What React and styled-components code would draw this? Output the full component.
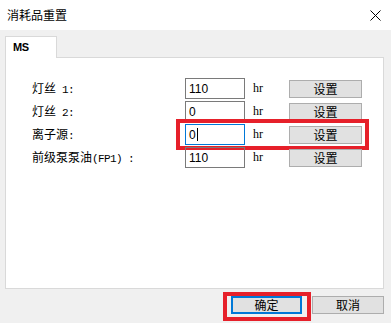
import styled, { createGlobalStyle } from 'styled-components'

const GlobalStyle = createGlobalStyle`
  html, body {
    margin: 0;
    padding: 0;
    background: #f0f0f0;
    overflow: hidden;
  }
  * { box-sizing: border-box; }
`

const Window = styled.div`
  width: 391px;
  height: 323px;
  display: flex;
  flex-direction: column;
  background: #f0f0f0;
  font-family: "Noto Sans CJK SC", "Liberation Sans", sans-serif;
  font-size: 12px;
  color: #000;
`

const TitleBar = styled.div`
  height: 30px;
  background: #fff;
  display: flex;
  align-items: center;
  justify-content: space-between;
  padding: 0 10px 0 7px;
`
const Title = styled.span`
  font-size: 12px;
  line-height: 1;
`
const Close = styled.svg`
  width: 11px;
  height: 11px;
`

const Body = styled.div`
  flex: 1;
  display: flex;
  flex-direction: column;
  padding: 6px 7px 0 5px;
`

const TabStrip = styled.div`
  display: flex;
  height: 21px;
`
const Tab = styled.div`
  width: 52px;
  height: 22px;
  background: #fff;
  border: 1px solid #d9d9d9;
  border-bottom: none;
  position: relative;
  z-index: 1;
  padding: 5px 0 0 7px;
  font-family: "Liberation Sans", sans-serif;
  font-size: 11px;
  font-weight: bold;
  line-height: 1;
  letter-spacing: -0.5px;
`

const Panel = styled.div`
  height: 232px;
  background: #fff;
  border: 1px solid #d9d9d9;
  padding: 20px 0 0 26px;
  display: flex;
  flex-direction: column;
  gap: 2px;
`

const Row = styled.div`
  position: relative;
  display: flex;
  align-items: center;
  height: 21px;
`
const Label = styled.span`
  width: 153px;
  line-height: 1;
  white-space: pre;
`
const Ascii = styled.span`
  font-family: "Liberation Mono", monospace;
  font-size: 11px;
  letter-spacing: -0.6px;
`
const Field = styled.div`
  width: 60px;
  height: 21px;
  border: 1px solid ${p => (p.focused ? '#0078d7' : '#7a7a7a')};
  display: flex;
  align-items: center;
  padding-left: 3px;
  font-family: "Liberation Sans", sans-serif;
  font-size: 12px;
`
const Caret = styled.span`
  display: inline-block;
  width: 1px;
  height: 13px;
  background: #000;
  margin-left: 1px;
`
const Unit = styled.span`
  width: 44px;
  padding-left: 8px;
  font-family: "Liberation Serif", serif;
  font-size: 12px;
`
const Button = styled.div`
  width: ${p => p.w || 73}px;
  height: 18px;
  background: #e1e1e1;
  border: ${p => (p.primary ? '2px solid #0078d7' : '1px solid #adadad')};
  display: flex;
  align-items: center;
  justify-content: center;
  position: relative;
  line-height: 1;
`

const Highlight = styled.div`
  position: absolute;
  border: 4px solid #e6202a;
  top: ${p => p.top}px;
  left: ${p => p.left}px;
  width: ${p => p.width}px;
  height: ${p => p.height}px;
  pointer-events: none;
`

const Footer = styled.div`
  display: flex;
  justify-content: flex-end;
  gap: 10px;
  padding-top: 7px;
`

const rows = [
  { name: '灯丝', suffix: ' 1:', value: '110' },
  { name: '灯丝', suffix: ' 2:', value: '0' },
  { name: '离子源', suffix: ':', value: '0', focused: true },
  { name: '前级泵泵油', suffix: '(FP1) :', value: '110' },
]

const App = () => (
  <Window>
    <GlobalStyle />
    <TitleBar>
      <Title>消耗品重置</Title>
      <Close viewBox="0 0 11 11">
        <path d="M0.5 0.5 L10.5 10.5 M10.5 0.5 L0.5 10.5" stroke="#000" strokeWidth="1" fill="none" />
      </Close>
    </TitleBar>
    <Body>
      <TabStrip>
        <Tab>MS</Tab>
      </TabStrip>
      <Panel>
        {rows.map(r => (
          <Row key={r.name + r.suffix}>
            <Label>
              {r.name}
              <Ascii>{r.suffix}</Ascii>
            </Label>
            <Field focused={r.focused}>
              {r.value}
              {r.focused && <Caret />}
            </Field>
            <Unit>hr</Unit>
            <Button>设置</Button>
            {r.focused && <Highlight top={-5} left={144} width={193} height={31} />}
          </Row>
        ))}
      </Panel>
      <Footer>
        <Button w={71} primary>
          确定
          <Highlight top={-6} left={-10} width={88} height={29} />
        </Button>
        <Button w={72}>取消</Button>
      </Footer>
    </Body>
  </Window>
)

export default App
